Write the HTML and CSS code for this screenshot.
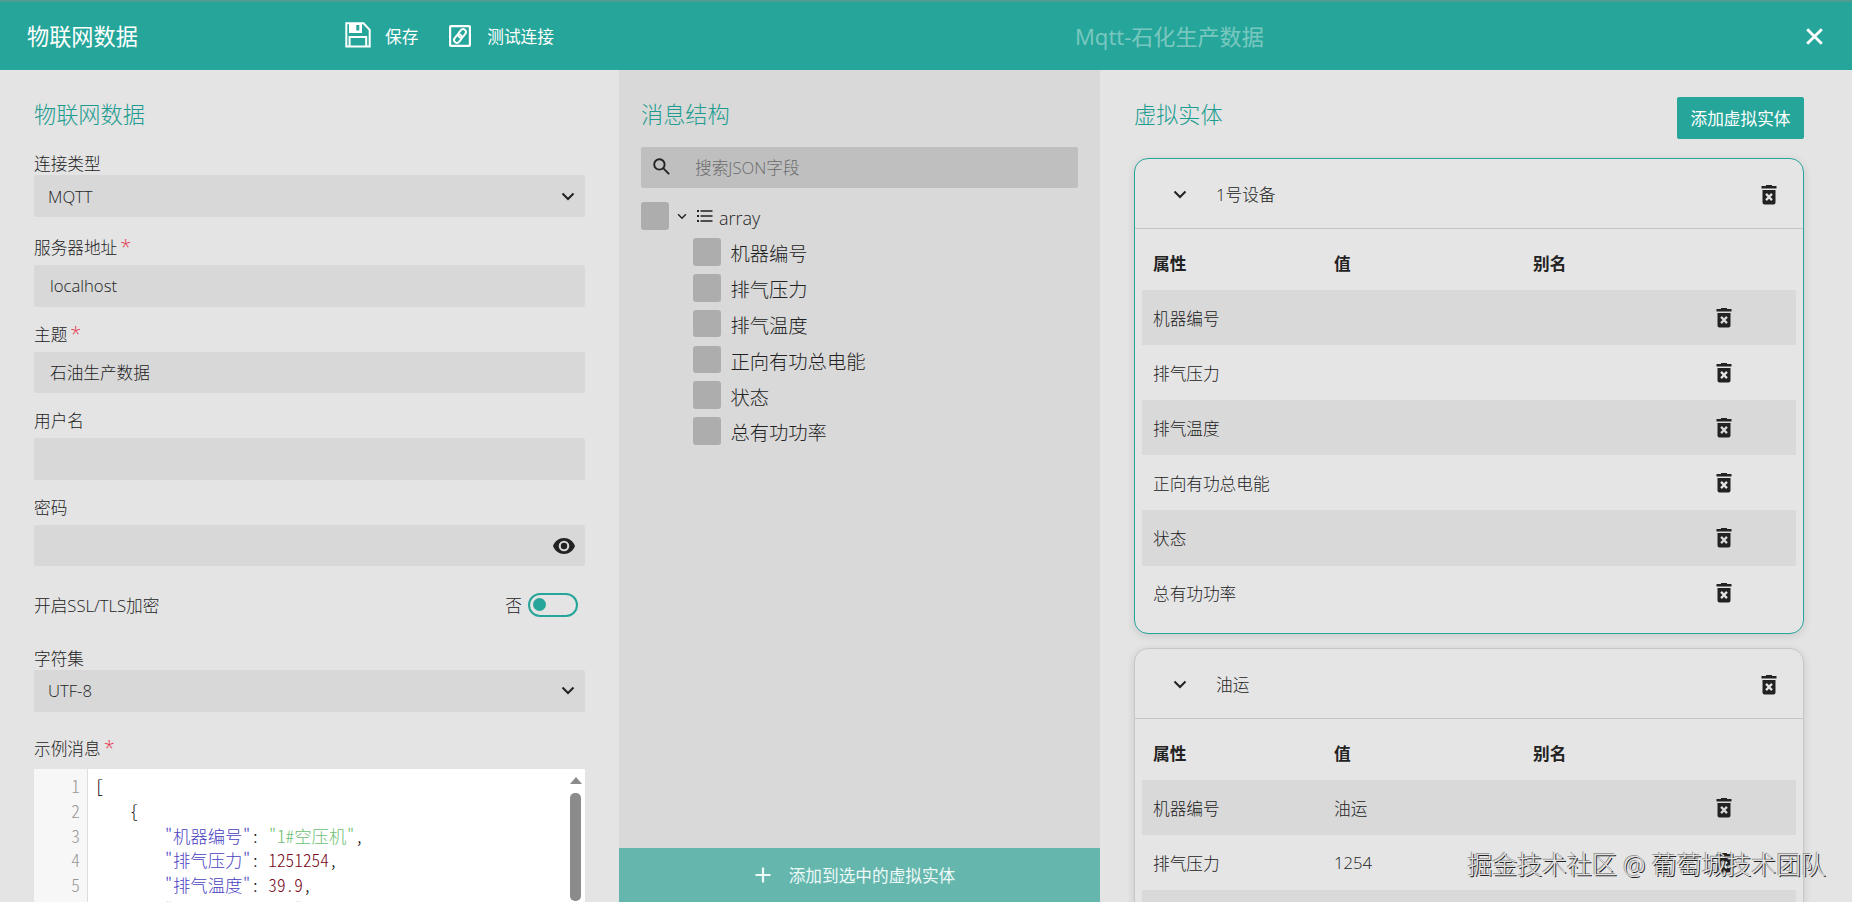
FILE: index.html
```html
<!DOCTYPE html>
<html lang="zh-CN">
<head>
    <meta charset="UTF-8">
    <meta name="viewport" content="width=device-width, initial-scale=1.0">
    <title>物联网数据</title>
    <link rel="stylesheet" href="styles.css">
</head>
<body>
    <!-- Iconos compartidos -->
    <svg class="sprite" width="0" height="0">
        <symbol id="i-chevron" viewBox="0 0 14 9">
            <path d="M1.5 1.5L7 7l5.5-5.5" fill="none" stroke="currentColor" stroke-width="2"/>
        </symbol>
        <symbol id="i-trash" viewBox="0 0 16 20">
            <path fill="currentColor" fill-rule="evenodd" d="M5 0h6v1h4.5v2.4H.5V1H5zM1.5 5h13v12.5q0 2-2 2h-9q-2 0-2-2zM5.9 8L4.2 9.7l2.3 2.3-2.3 2.3L5.9 16 8 13.8l2.1 2.2 1.7-1.7L9.500 12l2.3-2.3L10.1 8 8 10.2z"/>
        </symbol>
    </svg>

    <header class="topbar">
        <h1 class="topbar-title">物联网数据</h1>
        <div class="actions">
            <button class="action save">
                <svg width="26" height="26" viewBox="0 0 26 26" fill="none" stroke="currentColor" stroke-width="2">
                    <path d="M1.3 1.3H18.5L24.7 7.8V24.5H1.3z"/>
                    <path d="M4.6 24V15H21.2V24"/>
                    <path fill="currentColor" stroke="none" fill-rule="evenodd" d="M4 1h13v10H4zM11.3 3v5.5h3V3z"/>
                </svg>
                <span>保存</span>
            </button>
            <button class="action test">
                <svg width="22" height="22" viewBox="0 0 22 22" fill="none" stroke="currentColor">
                    <rect x="1.1" y="1.1" width="19.8" height="19.8" rx="1" stroke-width="2.2"/>
                    <g transform="rotate(-52 11 11)" stroke-width="1.9">
                        <rect x="3.2" y="8.1" width="9" height="5.8" rx="2.9"/>
                        <rect x="9.8" y="8.1" width="9" height="5.8" rx="2.9"/>
                    </g>
                </svg>
                <span>测试连接</span>
            </button>
        </div>
        <div class="doc-name">Mqtt-石化生产数据</div>
        <button class="close" aria-label="关闭">
            <svg width="17" height="17" viewBox="0 0 17 17"><path d="M1.2 1.2l14.6 14.6M15.8 1.2L1.2 15.8" stroke="currentColor" stroke-width="2.8"/></svg>
        </button>
    </header>

    <main class="columns">
        <!-- Configuración de la conexión -->
        <section class="panel source">
            <h2>物联网数据</h2>
            <div class="field select-field">
                <label>连接类型</label>
                <div class="select"><span>MQTT</span><svg width="14" height="9"><use href="#i-chevron"/></svg></div>
            </div>
            <div class="field">
                <label>服务器地址<i class="req">*</i></label>
                <input class="input" type="text" value="localhost">
            </div>
            <div class="field">
                <label>主题<i class="req">*</i></label>
                <input class="input" type="text" value="石油生产数据">
            </div>
            <div class="field">
                <label>用户名</label>
                <input class="input" type="text">
            </div>
            <div class="field">
                <label>密码</label>
                <div class="input password">
                    <svg width="22" height="16" viewBox="0 0 22 16">
                        <path fill="currentColor" fill-rule="evenodd" d="M11 0C6 0 1.8 3.2 0 8c1.8 4.8 6 8 11 8s9.2-3.2 11-8C20.2 3.2 16 0 11 0zM11 2.7a5.3 5.3 0 1 1 0 10.6 5.3 5.3 0 0 1 0-10.6z"/>
                        <circle cx="11" cy="8" r="3.2" fill="currentColor"/>
                    </svg>
                </div>
            </div>
            <div class="switch-row">
                <span>开启SSL/TLS加密</span>
                <span class="switch-text">否</span>
                <span class="switch"></span>
            </div>
            <div class="field select-field">
                <label>字符集</label>
                <div class="select"><span>UTF-8</span><svg width="14" height="9"><use href="#i-chevron"/></svg></div>
            </div>
            <div class="field sample">
                <label>示例消息<i class="req">*</i></label>
                <div class="editor">
                    <div class="gutter"><span>1</span><span>2</span><span>3</span><span>4</span><span>5</span><span>6</span></div>
<pre class="code">[
    {
        <span class="key">"机器编号"</span>: <span class="str">"1#空压机"</span>,
        <span class="key">"排气压力"</span>: <span class="num">1251254</span>,
        <span class="key">"排气温度"</span>: <span class="num">39.9</span>,
        <span class="key">"正向有功总电能"</span>: <span class="num">1254</span>,</pre>
                    <div class="scroll"><span class="arrow"></span><span class="thumb"></span></div>
                </div>
            </div>
        </section>

        <!-- Estructura del mensaje -->
        <section class="panel structure">
            <h2>消息结构</h2>
            <div class="search">
                <svg width="17" height="17" viewBox="0 0 17 17" fill="none" stroke="currentColor" stroke-width="1.9">
                    <circle cx="6.4" cy="6.4" r="5.2"/>
                    <path d="M10.2 10.2l5.9 5.9"/>
                </svg>
                <input type="text" placeholder="搜索JSON字段">
            </div>
            <ul class="tree">
                <li class="root">
                    <span class="check"></span>
                    <svg class="caret" width="10" height="7" viewBox="0 0 14 9"><use href="#i-chevron"/></svg>
                    <svg class="list" width="16" height="12" viewBox="0 0 16 12" fill="currentColor">
                        <path d="M0 0h2v2H0zM0 5h2v2H0zM0 10h2v2H0zM3.5 .2h12v1.6h-12zM3.5 5.2h12v1.6h-12zM3.5 10.2h12v1.6h-12z"/>
                    </svg>
                    <span class="name">array</span>
                </li>
                <li><span class="check"></span><span class="name">机器编号</span></li>
                <li><span class="check"></span><span class="name">排气压力</span></li>
                <li><span class="check"></span><span class="name">排气温度</span></li>
                <li><span class="check"></span><span class="name">正向有功总电能</span></li>
                <li><span class="check"></span><span class="name">状态</span></li>
                <li><span class="check"></span><span class="name">总有功功率</span></li>
            </ul>
            <button class="add-selected">
                <svg width="16" height="16" viewBox="0 0 16 16"><path d="M8 .5v15M.5 8h15" stroke="currentColor" stroke-width="2.2"/></svg>
                <span>添加到选中的虚拟实体</span>
            </button>
        </section>

        <!-- Entidades virtuales -->
        <section class="panel entities">
            <div class="entities-head">
                <h2>虚拟实体</h2>
                <button class="add-entity">添加虚拟实体</button>
            </div>

            <div class="card active">
                <div class="card-head">
                    <svg width="14" height="9"><use href="#i-chevron"/></svg>
                    <span>1号设备</span>
                    <svg class="trash"><use href="#i-trash"/></svg>
                </div>
                <div class="table">
                    <div class="row head"><span>属性</span><span>值</span><span>别名</span></div>
                    <div class="row"><span>机器编号</span><span></span><span></span><svg class="trash"><use href="#i-trash"/></svg></div>
                    <div class="row"><span>排气压力</span><span></span><span></span><svg class="trash"><use href="#i-trash"/></svg></div>
                    <div class="row"><span>排气温度</span><span></span><span></span><svg class="trash"><use href="#i-trash"/></svg></div>
                    <div class="row"><span>正向有功总电能</span><span></span><span></span><svg class="trash"><use href="#i-trash"/></svg></div>
                    <div class="row"><span>状态</span><span></span><span></span><svg class="trash"><use href="#i-trash"/></svg></div>
                    <div class="row"><span>总有功功率</span><span></span><span></span><svg class="trash"><use href="#i-trash"/></svg></div>
                </div>
            </div>

            <div class="card">
                <div class="card-head">
                    <svg width="14" height="9"><use href="#i-chevron"/></svg>
                    <span>油运</span>
                    <svg class="trash"><use href="#i-trash"/></svg>
                </div>
                <div class="table">
                    <div class="row head"><span>属性</span><span>值</span><span>别名</span></div>
                    <div class="row"><span>机器编号</span><span>油运</span><span></span><svg class="trash"><use href="#i-trash"/></svg></div>
                    <div class="row"><span>排气压力</span><span>1254</span><span></span><svg class="trash"><use href="#i-trash"/></svg></div>
                    <div class="row"></div>
                </div>
            </div>
        </section>
    </main>

    <div class="watermark">掘金技术社区 @ 葡萄城技术团队</div>
</body>
</html>
```
FILE: styles.css
```css
* {
    margin: 0;
    padding: 0;
    box-sizing: border-box;
}

body {
    height: 902px;
    overflow: hidden;
    display: flex;
    flex-direction: column;
    font-family: "Open Sans", "Noto Sans CJK SC", sans-serif;
    font-size: 16.67px;
    font-weight: 300;
    color: #222;
    background-color: #e4e4e4;
}

button,
input {
    font: inherit;
    color: inherit;
    border: none;
    background: none;
    outline: none;
}

svg {
    flex: none;
}

.sprite {
    position: absolute;
}

/* Barra superior */
.topbar {
    flex: none;
    height: 70px;
    padding: 0 29px 0 27px;
    display: flex;
    align-items: center;
    border-top: 2px solid #4f9c92;
    background-color: #26a69a;
    color: #fff;
}

.topbar-title {
    width: 318px;
    padding-bottom: 2px;
    font-size: 22.2px;
    font-weight: 400;
}

.actions {
    width: 730px;
    display: flex;
    align-items: center;
}

.action {
    display: flex;
    align-items: center;
    white-space: nowrap;
    font-weight: 400;
}

.action span {
    padding-bottom: 1px;
}

.action.save svg {
    margin-bottom: 3px;
}

.save {
    gap: 14px;
    margin-right: 31px;
}

.test {
    gap: 16px;
}

.doc-name {
    flex: 1;
    padding-bottom: 2px;
    font-size: 22.1px;
    font-weight: 400;
    color: rgba(255, 255, 255, 0.4);
}

.close {
    display: flex;
}

/* Columnas */
.columns {
    flex: 1;
    min-height: 0;
    display: grid;
    grid-template-columns: 619px 481px 1fr;
}

.panel {
    min-height: 0;
    overflow: hidden;
    display: flex;
    flex-direction: column;
}

h2 {
    height: 30px;
    line-height: 30px;
    font-size: 22.2px;
    font-weight: 300;
    color: #1d9c90;
}

/* Formulario */
.source {
    padding: 30px 34px 0;
}

.source h2 {
    margin-bottom: 23px;
}

.field {
    flex: none;
    margin-bottom: 17px;
}

.field label {
    display: block;
    height: 22px;
    line-height: 22px;
    margin-bottom: 6px;
}

.select-field {
    margin-bottom: 20px;
}

.select-field label {
    margin-bottom: 0;
}

.req {
    margin-left: 3px;
    font-style: normal;
    font-size: 20px;
    line-height: 20px;
    color: #e53950;
}

.input,
.select {
    display: flex;
    align-items: center;
    width: 551px;
    height: 41.6px;
    border-radius: 2px;
    background-color: #d8d8d8;
}

.input {
    padding: 0 16px;
}

.select {
    height: 42px;
    justify-content: space-between;
    padding: 0 10px 0 14px;
}

.password {
    justify-content: flex-end;
    padding-right: 10px;
}

.switch-row {
    flex: none;
    width: 551px;
    height: 24px;
    margin: 9.6px 0 31px;
    padding-right: 7px;
    display: flex;
    align-items: center;
}

.switch-text {
    margin-left: auto;
    margin-right: 6px;
}

.switch {
    width: 50px;
    height: 24px;
    padding: 3px;
    border: 2px solid #26a69a;
    border-radius: 12px;
}

.switch::before {
    content: "";
    display: block;
    width: 13px;
    height: 13px;
    border-radius: 50%;
    background-color: #26a69a;
}

.sample {
    margin-top: 6px;
}

.sample label {
    margin-bottom: 9px;
}

/* Editor JSON */
.editor {
    display: flex;
    width: 551px;
    height: 150px;
    background-color: #fff;
    font-family: "Noto Sans CJK SC", monospace;
    font-feature-settings: "hwid";
    font-size: 17.33px;
    line-height: 24.8px;
}

.gutter {
    width: 54px;
    padding: 5px 7px 0 0;
    display: flex;
    flex-direction: column;
    align-items: flex-end;
    border-right: 1px solid #ddd;
    background-color: #f7f7f7;
    color: #999;
}

.code {
    flex: 1;
    padding: 5px 0 0 7px;
    font: inherit;
    color: #000;
}

.key {
    color: #4a3fc0;
}

.str {
    color: #6cbf73;
}

.num {
    color: #7a0a1c;
}

.scroll {
    width: 19px;
    padding-top: 8px;
    display: flex;
    flex-direction: column;
    align-items: center;
}

.arrow {
    border: 6.5px solid transparent;
    border-top: none;
    border-bottom: 7px solid #8b8b8b;
}

.thumb {
    width: 11px;
    height: 108px;
    margin-top: 9px;
    border-radius: 5px;
    background-color: #8b8b8b;
}

/* Árbol de campos */
.structure {
    padding-top: 30px;
    background-color: #d9d9d9;
}

.structure h2 {
    margin: 0 22px 17px;
}

.search {
    flex: none;
    height: 41px;
    margin: 0 22px;
    padding-left: 12px;
    display: flex;
    align-items: center;
    gap: 25px;
    border-radius: 2px;
    background-color: #bfbfbf;
}

.search svg {
    margin-bottom: 2px;
}

.search input::placeholder {
    color: #6c6c6c;
}

.tree {
    flex: 1;
    padding: 10.3px 22px 0;
    list-style: none;
    font-size: 19.3px;
}

.tree li {
    height: 35.8px;
    padding-left: 52px;
    display: flex;
    align-items: center;
    gap: 10px;
}

.tree .name {
    padding-top: 3px;
}

.tree .root {
    padding-left: 0;
    gap: 0;
    font-size: 18px;
}

.check {
    width: 27.5px;
    height: 27.5px;
    border-radius: 3px;
    background-color: #adadad;
}

.caret {
    margin: 0 10px 0 8.5px;
}

.list {
    margin-right: 6px;
}

.add-selected {
    flex: none;
    height: 54px;
    display: flex;
    align-items: center;
    justify-content: center;
    gap: 18px;
    padding-right: 9px;
    background-color: #65b7ae;
    color: #eefaf8;
    font-weight: 400;
}

/* Entidades virtuales */
.entities {
    padding: 27px 48px 0 34px;
}

.entities-head {
    flex: none;
    height: 42px;
    margin-bottom: 19px;
    display: flex;
    justify-content: space-between;
}

.entities-head h2 {
    margin-top: 3px;
}

.add-entity {
    width: 127px;
    border-radius: 2px;
    background-color: #26a69a;
    color: #fff;
    font-weight: 400;
}

.card {
    flex: none;
    margin-bottom: 14.5px;
    border: 1px solid #c6c8c8;
    border-radius: 14px;
    box-shadow: 0 2px 8px rgba(0, 0, 0, 0.12);
    background-color: #e5e5e5;
}

.card.active {
    border-color: #26a69a;
}

.card-head {
    height: 70px;
    padding: 2px 26px 0 38px;
    display: flex;
    align-items: center;
    border-bottom: 1px solid #c4c6c6;
}

.card-head span {
    flex: 1;
    margin-left: 29px;
    padding-bottom: 2px;
}

.trash {
    width: 16px;
    height: 20px;
}

.table {
    padding: 6px 7px 12px;
}

.row {
    height: 55.1px;
    padding-left: 11px;
    display: grid;
    grid-template-columns: 181px 199px 183px 1fr;
    align-items: center;
}

.row:nth-child(even) {
    background-color: #d9d9d9;
}

.row.head {
    font-weight: 700;
}

/* Marca de agua */
.watermark {
    position: absolute;
    right: 26px;
    bottom: 20px;
    font-size: 24.9px;
    line-height: 36px;
    white-space: nowrap;
    color: #e2e2e2;
    text-shadow: 1px 1px 0 #222, -1px -1px 0 #999;
}
```
